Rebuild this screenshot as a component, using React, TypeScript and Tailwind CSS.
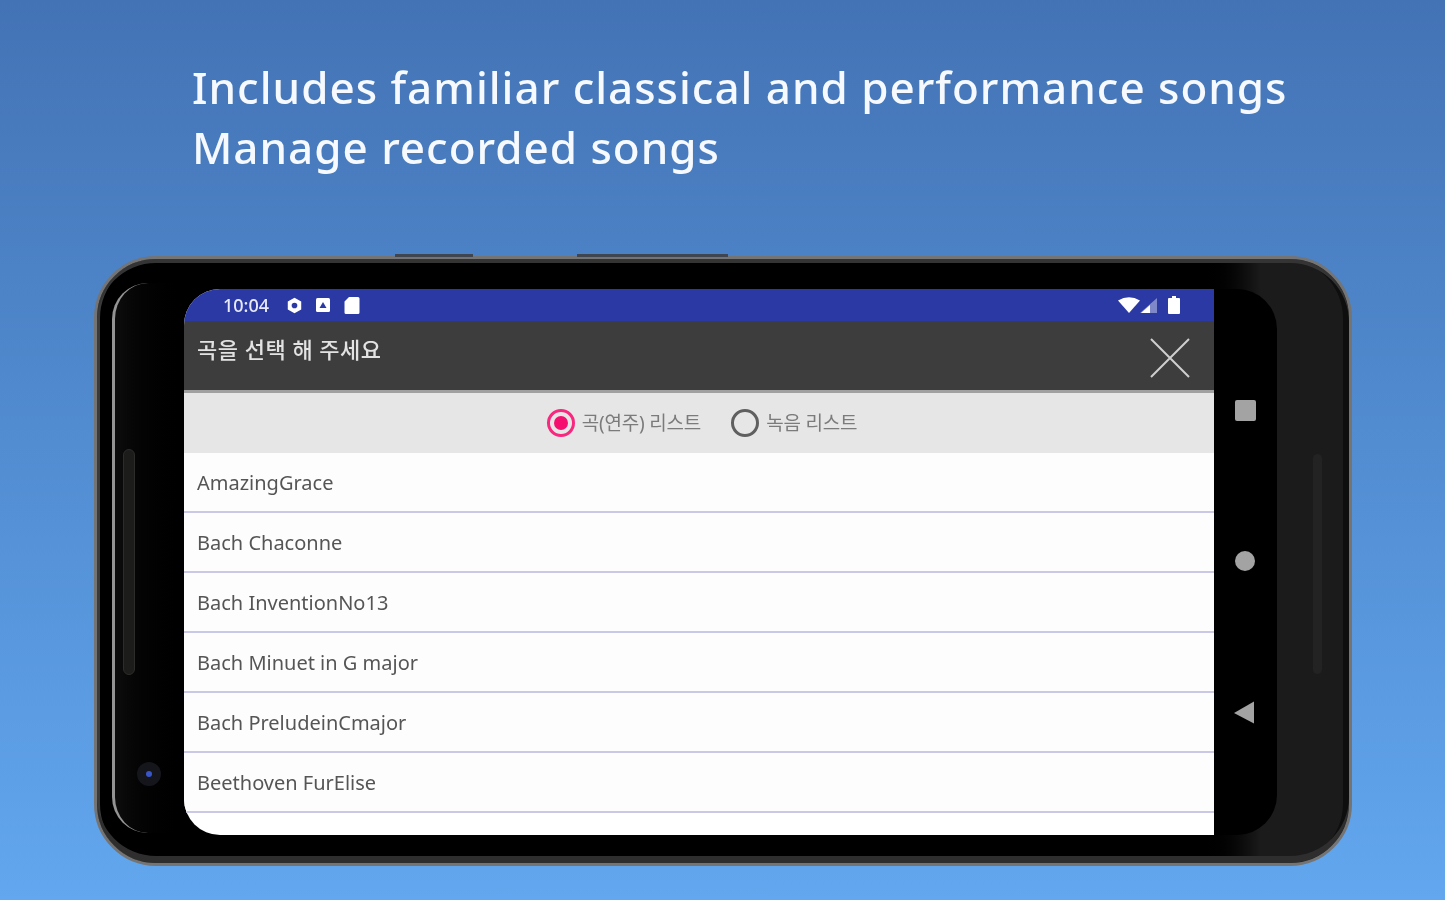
const songs = [
  'AmazingGrace',
  'Bach Chaconne',
  'Bach InventionNo13',
  'Bach Minuet in G major',
  'Bach PreludeinCmajor',
  'Beethoven FurElise',
]

function StatusBar() {
  return (
    <div className="h-[32px] shrink-0 bg-[#2b39a5] flex items-center justify-between pl-[39px] pr-[34px] text-white">
      <div className="flex items-center">
        <span className="text-[18px] leading-none font-medium text-[#e8eaf8] w-[63px]">10:04</span>
        <svg width="17" height="17" viewBox="0 0 24 24" fill="#fff" fillRule="evenodd">
          <path d="M12 1l9.500 5.500v11L12 23l-9.500-5.500v-11zM12 8a4 4 0 100 8 4 4 0 000-8z" />
        </svg>
        <svg className="ml-[13px]" width="14" height="14" viewBox="0 0 14 14">
          <rect width="14" height="14" rx="1.500" fill="#fff" />
          <path d="M3.500 10L7 4l3.500 6z" fill="#2b39a5" />
        </svg>
        <svg className="ml-[14px]" width="16" height="17" viewBox="0 0 16 17">
          <path d="M5 0h9a1.500 1.500 0 011.500 1.500v14A1.500 1.500 0 0114 17H2a1.500 1.500 0 01-1.500-1.500V4.500z" fill="#fff" />
        </svg>
      </div>
      <div className="flex items-center">
        <svg width="22" height="16" viewBox="0 0 22 16">
          <path d="M0 3.500Q11-3 22 3.500L11 16z" fill="#fff" />
        </svg>
        <svg width="18" height="15" viewBox="0 0 18 15">
          <path d="M17 0v15H0z" fill="#fff" fillOpacity="0.4" />
          <path d="M10 7v8H1z" fill="#fff" />
        </svg>
        <svg className="ml-[10px]" width="12" height="18" viewBox="0 0 12 18">
          <path d="M4 0h4v2h3a1 1 0 011 1v14a1 1 0 01-1 1H1a1 1 0 01-1-1V3a1 1 0 011-1h3z" fill="#fff" />
        </svg>
      </div>
    </div>
  )
}

function NavButtons() {
  return (
    <div className="w-[63px] shrink-0 bg-black rounded-r-[40px] relative">
      <div className="absolute left-[21px] top-[111px] w-[21px] h-[21px] rounded-[2px] bg-[#a3a3a3]" />
      <div className="absolute left-[21px] top-[262px] w-[20px] h-[20px] rounded-full bg-[#a3a3a3]" />
      <svg className="absolute left-[20px] top-[412px]" width="21" height="23" viewBox="0 0 21 23">
        <path d="M0 12L20 0.500V22.500z" fill="#a3a3a3" />
      </svg>
    </div>
  )
}

function RadioOption({ label, selected }: { label: string; selected?: boolean }) {
  return (
    <div className="flex items-center gap-[7px]">
      <div
        className={
          selected
            ? 'w-[28px] h-[28px] rounded-full border-[3px] border-[#f8287f] flex items-center justify-center'
            : 'w-[28px] h-[28px] rounded-full border-[3px] border-[#5f5f5f]'
        }
      >
        {selected && <div className="w-[14px] h-[14px] rounded-full bg-[#f5106f]" />}
      </div>
      <span className="text-[19px] leading-none text-[#7b7b7b] tracking-[-0.2px]">{label}</span>
    </div>
  )
}

export default function App() {
  return (
    <div
      className="w-[1445px] h-[900px] overflow-hidden bg-gradient-to-b from-[#4373b5] to-[#62a7ef] text-white blur-[0.5px]"
      style={{ fontFamily: '"Noto Sans", "Noto Sans CJK KR", sans-serif' }}
    >
      <div className="pt-[57px] pl-[192px] h-[256px]">
        <h1 className="text-[44px] leading-[60px] font-medium text-[#f6f9fd] tracking-[0.98px] whitespace-nowrap">
          Includes familiar classical and performance songs
          <br />
          Manage recorded songs
        </h1>
      </div>

      <div className="relative ml-[94px] w-[1258px] h-[610px] rounded-[62px] border-[3px] border-[#747474] bg-gradient-to-r from-black via-black via-[88%] to-[#1b1b1b] to-[93%] shadow-[inset_0_4px_0_#343434,inset_0_-7px_0_#2e2e2e,inset_3px_0_0_#3a3a3a,inset_-6px_0_0_#0e0e0e]">
        {/* top edge buttons */}
        <div className="absolute left-[298px] -top-[5px] w-[78px] h-[3px] bg-[#3f4650]" />
        <div className="absolute left-[480px] -top-[5px] w-[151px] h-[3px] bg-[#3f4650]" />
        {/* left inner panel with its edge highlight */}
        <div className="absolute left-[15px] top-[24px] bottom-[30px] w-[80px] rounded-l-[36px] border-l-[3px] border-[#949494] bg-gradient-to-r from-[#0d0d0d] to-black" />
        <div className="absolute left-[26px] top-[190px] w-[12px] h-[226px] rounded-full bg-[#1c1c1a] border border-[#2c2c2a]" />
        <div className="absolute left-[1216px] top-[195px] w-[9px] h-[220px] rounded-full bg-[#232323]" />
        <div className="absolute left-[40px] top-[503px] w-[24px] h-[24px] rounded-full bg-[#15151c] flex items-center justify-center">
          <div className="w-[6px] h-[6px] rounded-full bg-[#3a55c8]" />
        </div>

        <div className="relative flex ml-[87px] mt-[30px] h-[546px]">
          <div className="w-[1030px] shrink-0 flex flex-col rounded-l-[36px] overflow-hidden bg-white">
            <StatusBar />
            <div className="h-[72px] shrink-0 bg-[#3d3d3d] border-b-[3px] border-[#a0a0a0] flex justify-between pl-[13px] pr-[24px]">
              <span className="text-[22px] leading-none mt-[17px] font-medium tracking-[0.5px] text-[#e2e2e2]">
                곡을 선택 해 주세요
              </span>
              <svg className="mt-[17px]" width="40" height="40" viewBox="0 0 40 40" stroke="#cfcfcf" strokeWidth="2">
                <path d="M1 1l38 38M39 1L1 39" />
              </svg>
            </div>
            <div className="h-[60px] shrink-0 bg-[#e6e6e6] flex items-center justify-center gap-[30px] pl-[6px]">
              <RadioOption label="곡(연주) 리스트" selected />
              <RadioOption label="녹음 리스트" />
            </div>
            {songs.map((song) => (
              <div
                key={song}
                className="h-[60px] shrink-0 bg-[#fdfdfd] border-b-[2px] border-[#c9c8e6] pl-[13px] pt-[17px] text-[20px] leading-[26px] text-[#555555]"
              >
                {song}
              </div>
            ))}
          </div>
          <NavButtons />
        </div>
      </div>
    </div>
  )
}
